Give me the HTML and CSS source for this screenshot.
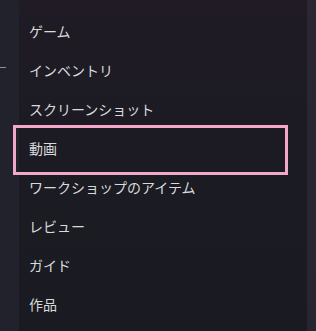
FILE: index.html
```html
<!DOCTYPE html>
<html lang="ja">
<head>
    <meta charset="UTF-8">
    <meta name="viewport" content="width=device-width, initial-scale=1.0">
    <title>コンテンツ</title>
    <link rel="stylesheet" href="styles.css">
</head>
<body>
    <div class="layout">
        <div class="side-strip">
            <div class="side-tick"></div>
        </div>

        <div class="menu-panel">
            <ul class="menu-list">
                <li class="menu-item">ゲーム</li>
                <li class="menu-item">インベントリ</li>
                <li class="menu-item">スクリーンショット</li>
                <li class="menu-item highlighted">動画</li>
                <li class="menu-item">ワークショップのアイテム</li>
                <li class="menu-item">レビュー</li>
                <li class="menu-item">ガイド</li>
                <li class="menu-item">作品</li>
            </ul>
        </div>

        <div class="scroll-strip"></div>
    </div>
</body>
</html>
```

FILE: styles.css
```css
* {
    box-sizing: border-box;
    margin: 0;
    padding: 0;
}

html, body {
    height: 100%;
}

body {
    font-family: "Noto Sans CJK JP", "Noto Sans", sans-serif;
    background-color: #1b1b22;
    overflow: hidden;
}

.layout {
    display: flex;
    height: 100%;
}

.side-strip {
    width: 19px;
    flex-shrink: 0;
    background: #21222b;
    padding-top: 67px;
}

.side-tick {
    width: 6px;
    height: 1px;
    background: #8d8f96;
}

.menu-panel {
    flex: 1;
    background: linear-gradient(180deg, #201b24 0%, #1c1b23 35%, #1a1b22 100%);
}

.menu-list {
    list-style: none;
    padding-top: 11px;
}

.menu-item {
    position: relative;
    height: 39px;
    display: flex;
    align-items: center;
    padding-left: 10px;
    color: #d9dadc;
    font-size: 14px;
    line-height: 1;
}

.menu-item.highlighted::after {
    content: "";
    position: absolute;
    top: -3px;
    bottom: -8px;
    left: -6px;
    right: 19px;
    border: 3px solid #f3a7c9;
}

.scroll-strip {
    width: 9px;
    flex-shrink: 0;
    background: linear-gradient(180deg, #2b2632 0%, #27262f 100%);
}
```
